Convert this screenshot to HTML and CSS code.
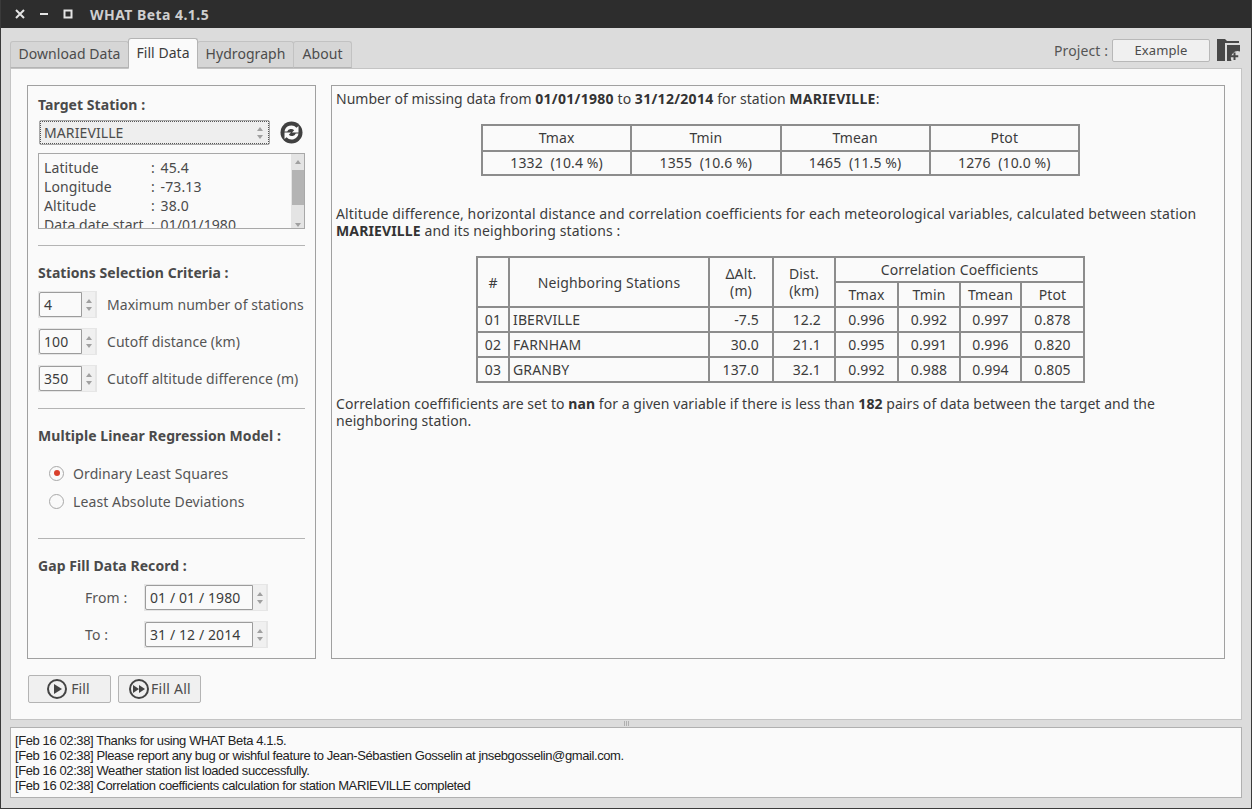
FILE: index.html
```html
<!DOCTYPE html>
<html lang="en">
<head>
<meta charset="utf-8">
<title>WHAT Beta 4.1.5</title>
<link rel="stylesheet" href="styles.css">
</head>
<body>
<div class="window">
  <header class="titlebar">
    <div class="winctl">
      <svg width="10" height="10" viewBox="0 0 10 10"><path d="M1 1l8 8M9 1l-8 8" stroke="#e4e4e4" stroke-width="2"/></svg>
      <svg width="10" height="10" viewBox="0 0 10 10"><path d="M1 5h8" stroke="#e4e4e4" stroke-width="2"/></svg>
      <svg width="10" height="10" viewBox="0 0 10 10"><rect x="1.500" y="1.500" width="7" height="7" fill="none" stroke="#e4e4e4" stroke-width="2"/></svg>
    </div>
    <div class="wintitle">WHAT Beta 4.1.5</div>
  </header>

  <div class="topbar">
    <nav class="tabs">
      <div class="tab t-dl">Download Data</div>
      <div class="tab active t-fill">Fill Data</div>
      <div class="tab t-hy">Hydrograph</div>
      <div class="tab t-ab">About</div>
    </nav>
    <div class="project">
      <span class="project-label">Project :</span>
      <div class="project-btn">Example</div>
      <svg class="folder" width="24" height="22" viewBox="0 0 24 22"><path d="M0 0h8l2 2h12v2H8v18H0z" fill="#484848"/><path d="M10 6h13v6.500a7 7 0 0 0-8.500 9.500H10z" fill="#484848"/><path d="M17.500 13.500v7.500M13.750 17.250h7.500" stroke="#484848" stroke-width="2"/></svg>
    </div>
  </div>

  <main class="pane">
    <div class="columns">
      <aside class="group left">
        <h2 class="h-first">Target Station :</h2>
        <div class="combo-row">
          <div class="combo"><span>MARIEVILLE</span><i class="arrows"><b class="up"></b><b class="down"></b></i></div>
          <svg class="refresh" width="23" height="23" viewBox="0 0 23 23"><circle cx="11.500" cy="11.500" r="11" fill="#404040"/><path d="M4.500 10.500a7 7 0 0 1 12-3.800l2-1.700v6.500h-6.500l2.200-2.200a4.300 4.300 0 0 0-7 1.200z" fill="#fafafa"/><path d="M18.500 12.500a7 7 0 0 1-12 3.800l-2 1.700v-6.500h6.500l-2.200 2.200a4.300 4.300 0 0 0 7-1.200z" fill="#fafafa"/></svg>
        </div>
        <div class="info">
          <div class="info-text">
            <div class="info-row"><span>Latitude</span><span>: 45.4</span></div>
            <div class="info-row"><span>Longitude</span><span>: -73.13</span></div>
            <div class="info-row"><span>Altitude</span><span>: 38.0</span></div>
            <div class="info-row"><span>Data date start</span><span>: 01/01/1980</span></div>
          </div>
          <div class="vscroll"><b class="up"></b><div class="thumb"></div><b class="down"></b></div>
        </div>
        <hr class="hr-a">
        <h2>Stations Selection Criteria :</h2>
        <div class="crit">
          <div class="crit-row"><div class="spin"><div class="spin-val">4</div><i class="arrows"><b class="up"></b><b class="down"></b></i></div><span>Maximum number of stations</span></div>
          <div class="crit-row"><div class="spin"><div class="spin-val">100</div><i class="arrows"><b class="up"></b><b class="down"></b></i></div><span>Cutoff distance (km)</span></div>
          <div class="crit-row"><div class="spin"><div class="spin-val">350</div><i class="arrows"><b class="up"></b><b class="down"></b></i></div><span>Cutoff altitude difference (m)</span></div>
        </div>
        <hr class="hr-b">
        <h2>Multiple Linear Regression Model :</h2>
        <div class="radios">
          <div class="radio-row"><i class="radio on"></i><span>Ordinary Least Squares</span></div>
          <div class="radio-row"><i class="radio"></i><span>Least Absolute Deviations</span></div>
        </div>
        <hr class="hr-c">
        <h2>Gap Fill Data Record :</h2>
        <div class="dates">
          <div class="date-row"><span class="date-label">From :</span><div class="spin date"><div class="spin-val">01 / 01 / 1980</div><i class="arrows"><b class="up"></b><b class="down"></b></i></div></div>
          <div class="date-row"><span class="date-label">To :</span><div class="spin date"><div class="spin-val">31 / 12 / 2014</div><i class="arrows"><b class="up"></b><b class="down"></b></i></div></div>
        </div>
      </aside>

      <section class="group right">
        <p class="p1">Number of missing data from <b>01/01/1980</b> to <b>31/12/2014</b> for station <b>MARIEVILLE</b>:</p>
        <table class="t1">
          <tr class="r26"><td>Tmax</td><td>Tmin</td><td>Tmean</td><td>Ptot</td></tr>
          <tr><td>1332&nbsp; (10.4 %)</td><td>1355&nbsp; (10.6 %)</td><td>1465&nbsp; (11.5 %)</td><td>1276&nbsp; (10.0 %)</td></tr>
        </table>
        <p class="p2">Altitude difference, horizontal distance and correlation coefficients for each meteorological variables, calculated between station <b>MARIEVILLE</b> and its neighboring stations :</p>
        <table class="t2">
          <colgroup><col class="c1"><col class="c2"><col class="c3"><col class="c4"><col class="c5"><col class="c6"><col class="c7"><col class="c8"></colgroup>
          <tr><td rowspan="2">#</td><td rowspan="2">Neighboring Stations</td><td rowspan="2">&Delta;Alt.<br>(m)</td><td rowspan="2">Dist.<br>(km)</td><td colspan="4">Correlation Coefficients</td></tr>
          <tr><td>Tmax</td><td>Tmin</td><td>Tmean</td><td>Ptot</td></tr>
          <tr><td>01</td><td class="l">IBERVILLE</td><td class="r">-7.5</td><td class="r">12.2</td><td>0.996</td><td>0.992</td><td>0.997</td><td>0.878</td></tr>
          <tr><td>02</td><td class="l">FARNHAM</td><td class="r">30.0</td><td class="r">21.1</td><td>0.995</td><td>0.991</td><td>0.996</td><td>0.820</td></tr>
          <tr><td>03</td><td class="l">GRANBY</td><td class="r">137.0</td><td class="r">32.1</td><td>0.992</td><td>0.988</td><td>0.994</td><td>0.805</td></tr>
        </table>
        <p class="p3">Correlation coeffificients are set to <b>nan</b> for a given variable if there is less than <b>182</b> pairs of data between the target and the neighboring station.</p>
      </section>
    </div>
    <div class="actions">
      <div class="btn b-fill"><svg width="22" height="22" viewBox="0 0 22 22"><circle cx="11" cy="11" r="9" fill="none" stroke="#444" stroke-width="2"/><path d="M8 6l8 5-8 5z" fill="#444"/></svg><span>Fill</span></div>
      <div class="btn b-all"><svg width="22" height="22" viewBox="0 0 22 22"><circle cx="11" cy="11" r="9" fill="none" stroke="#444" stroke-width="2"/><path d="M5 7l6 4-6 4zM11 7l6 4-6 4z" fill="#444"/></svg><span>Fill All</span></div>
    </div>
  </main>

  <div class="splitter"><i></i><i></i><i></i></div>

  <div class="log">
    <div>[Feb 16 02:38] Thanks for using WHAT Beta 4.1.5.</div>
    <div>[Feb 16 02:38] Please report any bug or wishful feature to Jean-Sébastien Gosselin at jnsebgosselin@gmail.com.</div>
    <div>[Feb 16 02:38] Weather station list loaded successfully.</div>
    <div>[Feb 16 02:38] Correlation coefficients calculation for station MARIEVILLE completed</div>
  </div>
</div>
</body>
</html>
```

FILE: styles.css
```css
* { box-sizing: border-box; }
html, body { margin: 0; height: 100%; }
body { font-family: "Noto Sans", sans-serif; font-size: 14px; letter-spacing: .1px; color: #3c3c3c; overflow: hidden; }
h2, p { margin: 0; }
hr { border: 0; border-top: 1px solid #b4b4b4; margin: 0; }
i { font-style: normal; display: block; }

.window { width: 1252px; height: 809px; background: #dcdcdc; display: flex; flex-direction: column; border: 1px solid #3a3a3a; border-top: 0; }

.titlebar { height: 28px; background: #2d2d2d; display: flex; align-items: center; flex: none; padding-left: 14px; }
.winctl { display: flex; gap: 14px; width: 75px; }
.wintitle { color: #cfcfcf; font-weight: 700; font-size: 14px; letter-spacing: .45px; }

.topbar { height: 40px; flex: none; display: flex; justify-content: space-between; padding: 10px 10px 0 9px; }
.tabs { display: flex; align-items: flex-end; height: 30px; }
.tab { height: 27px; background: #d6d6d6; border: 1px solid #c2c2c2; border-bottom: 1px solid #b4b4b4; margin-left: -1px; border-radius: 3px 3px 0 0; color: #4c4c4c; display: flex; align-items: center; justify-content: center; white-space: nowrap; font-size: 14px; letter-spacing: .05px; padding-bottom: 2px; }
.t-dl { width: 119px; margin-left: 0; }
.t-fill { width: 70px; }
.t-hy { width: 97px; }
.t-ab { width: 59px; }
.tab.active { height: 31px; background: #fafafa; border-color: #b4b4b4; border-bottom: 1px solid #fafafa; position: relative; z-index: 1; margin-bottom: -1px; color: #3c3c3c; padding-bottom: 2px; }
.project { display: flex; align-items: center; height: 24px; }
.project-label { color: #555; margin-right: 4px; }
.project-btn { width: 98px; height: 23px; border: 1px solid #b8b8b8; border-radius: 2px; background: #f0f0f0; display: flex; align-items: center; justify-content: center; font-size: 13px; color: #4c4c4c; }
.folder { margin-left: 7px; }

.pane { margin: 0 9px; height: 652px; flex: none; background: #fafafa; border: 1px solid #c4c4c4; padding: 16px; display: flex; flex-direction: column; }
.columns { display: flex; gap: 15px; height: 574px; flex: none; }
.group { border: 1px solid #a0a0a0; background: #fafafa; }
.left { width: 289px; flex: none; padding: 10px 10px 0; display: flex; flex-direction: column; }
.right { width: 894px; flex: none; padding: 4px 4px 0 4px; }

h2 { font-size: 14px; font-weight: 700; color: #4a4a4a; line-height: 18px; height: 18px; white-space: nowrap; letter-spacing: .06px; }
.combo-row { display: flex; align-items: center; margin-top: 6px; padding-left: 1px; }
.combo { width: 231px; height: 25px; border: 1px solid #a8a8a8; border-radius: 2px; background: #eeeeee; outline: 1px dotted #555; outline-offset: -2px; display: flex; align-items: center; justify-content: space-between; padding: 0 4px; color: #4c4c4c; }
.refresh { margin-left: 10px; }
.arrows { display: flex; flex-direction: column; gap: 4px; align-items: center; width: 11px; }
.up, .down { display: block; width: 0; height: 0; border-left: 3px solid transparent; border-right: 3px solid transparent; }
.up { border-bottom: 4px solid #a0a0a0; }
.down { border-top: 4px solid #a0a0a0; }

.info { height: 76px; margin-top: 8px; border: 1px solid #a8a8a8; display: flex; overflow: hidden; background: #fafafa; }
.info-text { flex: 1; padding: 4px 5px 0; overflow: hidden; }
.info-row { display: flex; height: 19px; line-height: 19px; white-space: nowrap; color: #4a4a4a; }
.info-row span:first-child { width: 107px; flex: none; }
.info-row span:last-child { word-spacing: 2px; }
.vscroll { width: 13px; background: #e4e4e4; display: flex; flex-direction: column; align-items: center; padding-top: 6px; }
.thumb { width: 12px; height: 35px; background: #b4b4b4; margin: 6px 0 18px; }

.hr-a { margin-top: 16px; }
.left h2:not(.h-first) { margin-top: 18px; }
.crit { margin-top: 9px; display: flex; flex-direction: column; gap: 10px; }
.crit-row { display: flex; align-items: center; height: 27px; white-space: nowrap; color: #555; }
.crit-row > span { margin-left: 10px; letter-spacing: .05px; }
.spin { width: 59px; height: 27px; background: #e6e6e6; display: flex; padding: 1px 2px 1px 1px; position: relative; }
.spin-val { flex: 1; background: #fafafa; border: 1px solid #9c9c9c; border-radius: 2px 0 0 2px; padding-left: 4px; line-height: 23px; color: #3c3c3c; white-space: nowrap; }
.spin .arrows { width: 13px; justify-content: center; gap: 4px; background: #f0f0f0; }
.hr-b { margin-top: 16px; }
.radios { margin-top: 18px; padding-left: 11px; display: flex; flex-direction: column; gap: 8px; }
.radio-row { display: flex; align-items: center; height: 20px; gap: 9px; color: #555; white-space: nowrap; }
.radio { width: 15px; height: 15px; border: 1px solid #a8a8a8; border-radius: 50%; background: #fafafa; position: relative; }
.radio.on::after { content: ""; position: absolute; left: 3.500px; top: 3.500px; width: 6px; height: 6px; border-radius: 50%; background: #d9402b; }
.hr-c { margin-top: 27px; }
.dates { margin-top: 9px; display: flex; flex-direction: column; gap: 10px; }
.date-row { display: flex; align-items: center; height: 27px; padding-left: 47px; }
.date-label { width: 59px; color: #555; }
.date { width: 124px; }

.right p { line-height: 17px; color: #3c3c3c; letter-spacing: .13px; }
.right .p1 { height: 17px; letter-spacing: .03px; }
.right .p1 b { letter-spacing: .3px; }
.right b { font-weight: 700; color: #333; }
table { border-collapse: collapse; table-layout: fixed; color: #3c3c3c; letter-spacing: .13px; }
td { border: 2px solid #8c8c8c; text-align: center; padding: 0; white-space: nowrap; line-height: 17px; }
.t1 { width: 599px; height: 52px; margin: 17px 0 0 145px; }
.t1 td { width: 25%; padding-bottom: 1px; }
.r26 { height: 26px; }
.p2 { margin-top: 29px; }
.t2 { width: 607px; height: 125px; margin: 17px 0 0 140px; }
.t2 tr { height: 25px; }
.c1 { width: 32px; } .c2 { width: 200px; } .c3 { width: 64px; } .c4 { width: 62px; }
.c5 { width: 63px; } .c6 { width: 62px; } .c7 { width: 61px; } .c8 { width: 63px; }
.l { text-align: left; padding-left: 3px; }
.r { text-align: right; padding-right: 13px; }
.right .p3 { margin-top: 12px; letter-spacing: .065px; }

.actions { display: flex; gap: 7px; margin-top: 16px; padding-left: 1px; }
.btn { height: 28px; border: 1px solid #b4b4b4; border-radius: 2px; background: #f0f0f0; display: flex; align-items: center; justify-content: center; gap: 3px; color: #4c4c4c; width: 83px; padding-bottom: 1px; }
.b-fill span { margin-right: 3px; }
.b-all { gap: 1px; }
.b-all span { letter-spacing: .25px; }

.splitter { height: 7px; flex: none; display: flex; justify-content: center; align-items: center; gap: 1px; }
.splitter i { width: 1px; height: 5px; background: #b0b0b0; }

.log { margin: 0 9px; height: 71px; flex: none; background: #fafafa; border: 1px solid #b0b0b0; padding: 5px 4px; font-family: "Liberation Sans", sans-serif; font-size: 13px; letter-spacing: -.4px; line-height: 15px; color: #222; white-space: nowrap; }
```
